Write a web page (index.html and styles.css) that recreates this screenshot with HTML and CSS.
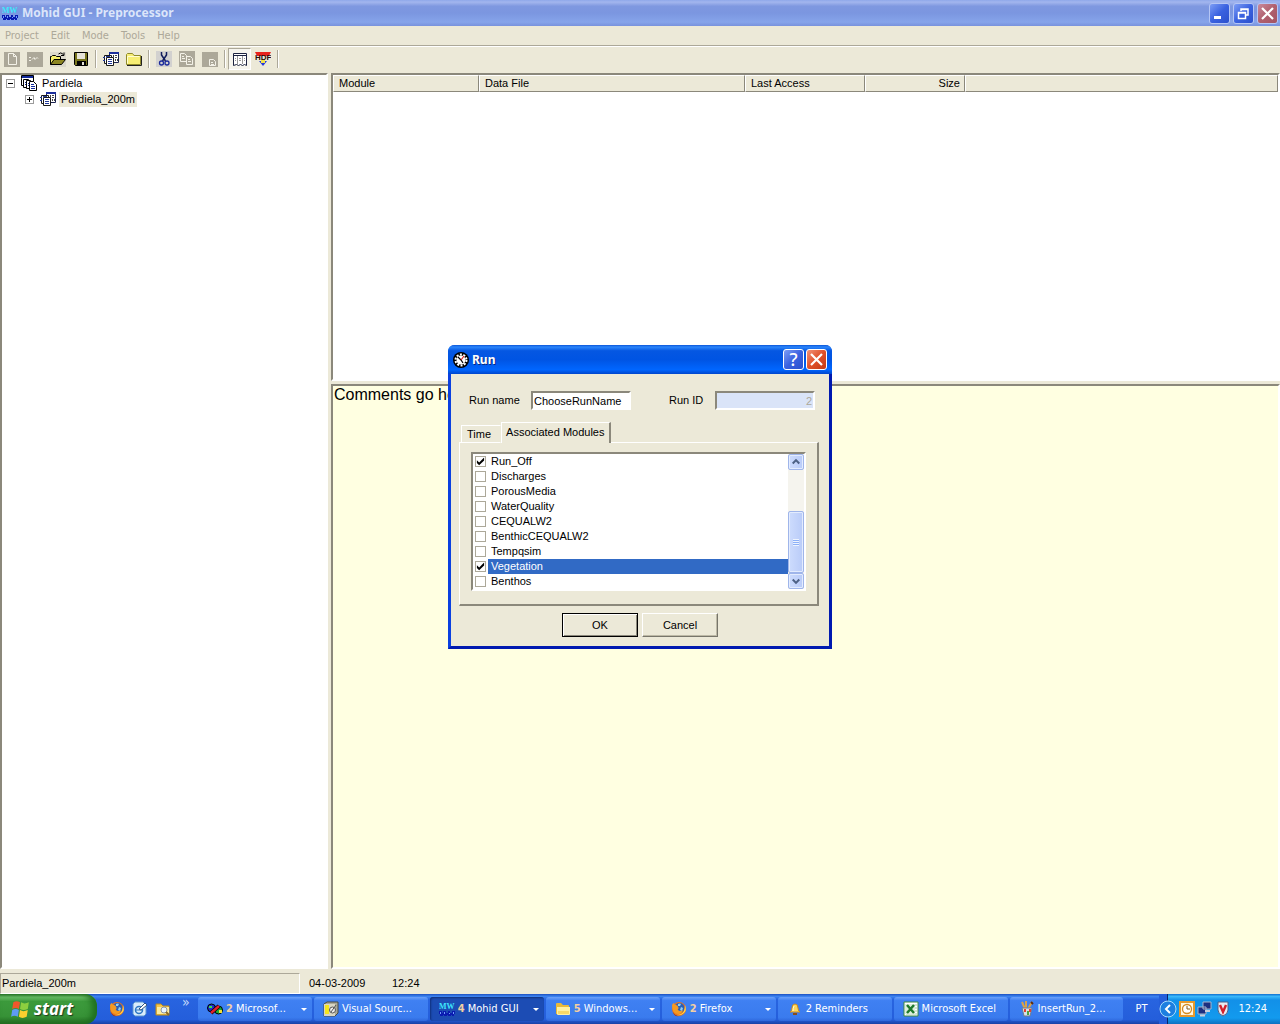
FILE: index.html
```
<!DOCTYPE html>
<html lang="en">
<head>
    <meta charset="utf-8" />
    <title>Mohid GUI - Preprocessor</title>
    <link rel="stylesheet" href="styles.css">
</head>
<body>

<!-- shared icons -->
<svg class="defs" aria-hidden="true">
    <symbol id="i-mohid" viewBox="0 0 16 16">
        <text x="0" y="8" font-family="Liberation Serif" font-size="8" font-weight="bold" fill="#3ee6fb">MW</text>
        <path d="M0 10h3v2h1v-2h3v2h2v-2h2v2h2v-2h3v3h-1v2h-2v-1h-1v1H9v-1H8v1H5v-1H4v1H1v-2H0z" fill="#0a1bb0"/>
        <path d="M1 11h1v2H1zM5 11h1v2H5zM10 12h1v1h-1zM14 11h1v2h-1z" fill="#6f9bff"/>
    </symbol>
    <symbol id="i-run" viewBox="0 0 16 16">
        <path d="M6.500 1.500h9v10h-9z" fill="#fff" stroke="#1a2350"/>
        <path d="M6 1h10v2H6z" fill="#1c2f9c"/>
        <path d="M1.500 4.500h7v8h-7z" fill="#fff" stroke="#1a1a1a"/>
        <path d="M3.500 6.500h7v8h-7z" fill="#fff" stroke="#1a1a1a"/>
        <path d="M0 6.500h2M0 9.500h2M5 8.500h4M5 10.500h4M5 12.500h4M3 5.500h4" stroke="#223a9c"/>
        <path d="M10 4h1v2h-1zM12 4h2v1h-2zM12 6h2v1h-2zM12 8h1v2h-1zM14 8h1v2h-1z" fill="#444"/>
    </symbol>
    <symbol id="i-project" viewBox="0 0 16 16">
        <path d="M.5 3.500v-3h12v10H.5z" fill="#fff" stroke="#000"/>
        <path d="M1 1h11v2H1z" fill="#122a9c"/>
        <path d="M2.500 4.500h5l2 2v6h-7z" fill="#fff" stroke="#000"/>
        <path d="M5.500 5.500h4l2 2v6h-6z" fill="#fff" stroke="#000"/>
        <path d="M8.500 6.500h4l3 3v6h-7z" fill="#fff" stroke="#000"/>
        <path d="M10 9.500h3M10 11.500h4M10 13.500h4M7 8.500h1M7 10.500h1M4 7.500h1M4 9.500h1" stroke="#122a9c"/>
    </symbol>
    <symbol id="i-folder" viewBox="0 0 16 16">
        <path d="M.5 13.500v-10l1-1h5l1.500 2h6.500v9z" fill="#f7ee74" stroke="#8f8a2c"/>
        <path d="M1.500 12.500V5.500h12" fill="none" stroke="#fffdd0"/>
        <path d="M1 14.500h14.500V5" fill="none" stroke="#222"/>
    </symbol>
    <symbol id="i-xpfolder" viewBox="0 0 16 16">
        <path d="M1 3q0-1 1-1h4l2 2h5q1 0 1 1v8H1z" fill="#e8b93b"/>
        <path d="M2 6h13v7q0 1-1 1H3q-1 0-1-1z" fill="#fff0a0"/>
        <path d="M3 10h11v3H3z" fill="#f8d867"/>
    </symbol>
    <symbol id="i-firefox" viewBox="0 0 16 16">
        <circle cx="8" cy="8" r="7" fill="#e8731c"/>
        <circle cx="8.500" cy="7" r="5" fill="#2a5fb8"/>
        <path d="M7 3q2-1 3 0l-1 2-2 0zM10 6l2 1-1 3-2-1z" fill="#8fd0f4"/>
        <path d="M1 4q1-2 2-2 0 2 2 2l2 1q-1 1 1 2-2 1-1 2 2 2 5 0-1 4-5 4Q1 13 1 4z" fill="#f59a22"/>
        <path d="M14 4q2 5-1 8-3 3-8 2 6 0 8-4 1-3 1-6z" fill="#ffd84a"/>
        <path d="M2 11q2 4 6 4-5 1-6-4z" fill="#a5300c"/>
    </symbol>
</svg>

<div class="app">
    <header class="titlebar">
        <svg class="icon" aria-hidden="true"><use href="#i-mohid"/></svg>
        <h1 class="title">Mohid GUI - Preprocessor</h1>
        <button class="caption" type="button" aria-label="Minimize"><svg viewBox="0 0 19 19"><path d="M4 12h7v3H4z" fill="#fff"/></svg></button>
        <button class="caption" type="button" aria-label="Restore"><svg viewBox="0 0 19 19"><path d="M7 7V5h7v6h-2M7 5.500h7M4.500 8.500h7v6h-7zM4.500 9h7" fill="none" stroke="#fff" stroke-width="1.500"/></svg></button>
        <button class="caption caption-close" type="button" aria-label="Close"><svg viewBox="0 0 19 19"><path d="M4 4l11 11M15 4L4 15" stroke="#fff" stroke-width="2.200"/></svg></button>
    </header>

    <nav class="menubar">
        <button type="button">Project</button>
        <button type="button">Edit</button>
        <button type="button">Mode</button>
        <button type="button">Tools</button>
        <button type="button">Help</button>
    </nav>

    <div class="toolbar">
        <button type="button" aria-label="New">
            <svg viewBox="0 0 16 16"><path d="M0 1h16v15H0z" fill="#aca899"/><path d="M4.500 2.500h5l3 3v8h-8zM9.500 2.500v3h3" fill="none" stroke="#f4f2e8"/></svg>
        </button>
        <button type="button" aria-label="Run">
            <svg viewBox="0 0 16 16"><path d="M0 1h16v15H0z" fill="#aca899"/><path d="M2 6.500h2M2 9.500h2M5 8.500l2-2 1 2 2-2 1 1" fill="none" stroke="#f4f2e8"/></svg>
        </button>
        <button type="button" aria-label="Open">
            <svg viewBox="0 0 16 16"><path d="M0 1h16v15H0z" fill="#dcd9cc"/><path d="M.5 13.500v-8h1l1-1h3l1 1h4v3" fill="#f5ef6a" stroke="#000"/><path d="M.5 13.500l3.500-5h11.500l-4 5z" fill="#8c8622" stroke="#000"/><path d="M8.500 3q2-2.500 5 .5M14 1.500v3h-3" fill="none" stroke="#000"/></svg>
        </button>
        <button type="button" aria-label="Save">
            <svg viewBox="0 0 16 16"><path d="M1.500 1.500h13v13h-12l-1-1z" fill="#77741c" stroke="#000"/><path d="M4 2h8v6H4z" fill="#e6e3d8"/><path d="M4 10h9v5H4z" fill="#000"/><path d="M9 11h2v3H9z" fill="#e6e3d8"/></svg>
        </button>
        <span class="sep"></span>
        <button type="button" aria-label="Runs"><svg><use href="#i-run"/></svg></button>
        <button type="button" aria-label="Folder"><svg><use href="#i-folder"/></svg></button>
        <span class="sep"></span>
        <button type="button" aria-label="Cut">
            <svg viewBox="0 0 16 16"><path d="M0 0h16v16H0z" fill="#d2d1cf"/><path d="M5.500 1v3l4 6M10.500 1v3l-4 6" fill="none" stroke="#111c5c" stroke-width="1.500"/><circle cx="5.500" cy="12" r="2" fill="none" stroke="#1b2b9c" stroke-width="1.300"/><circle cx="11" cy="12" r="2" fill="none" stroke="#1b2b9c" stroke-width="1.300"/></svg>
        </button>
        <button type="button" aria-label="Copy">
            <svg viewBox="0 0 16 16"><path d="M0 0h16v16H0z" fill="#aca899"/><path d="M1.500 2.500h4l2 2v6h-6zM7.500 5.500h4l2 2v6h-6zM3 5.500h2M3 7.500h3M9 8.500h2M9 10.500h3" fill="none" stroke="#f4f2e8"/></svg>
        </button>
        <button type="button" aria-label="Paste">
            <svg viewBox="0 0 16 16"><path d="M0 1h16v15H0z" fill="#aca899"/><path d="M7.500 8.500h4l2 2v4h-6zM9 11.500h2M9 13.500h3" fill="none" stroke="#f4f2e8"/></svg>
        </button>
        <span class="sep"></span>
        <button class="pressed" type="button" aria-label="Data files">
            <svg viewBox="0 0 16 16"><path d="M1.500 2.500h13v12l-2-1-2 1-2-1-2 1-2-1-3 1z" fill="#fff" stroke="#1c2340"/><path d="M1 4.500h14" stroke="#1c2340"/><path d="M5.500 5v8M10.500 5v8M3 7.500h1M7 7.500h2M12 7.500h1M3 9.500h1M7 9.500h2M12 9.500h1" stroke="#999"/></svg>
        </button>
        <button type="button" aria-label="HDF">
            <svg viewBox="0 0 16 16"><path d="M0 1h16l-2 4H2z" fill="#e8221c"/><path d="M4 10h8l-4 5z" fill="#2438d8"/><path d="M6 8h4v4H6z" fill="#f4e24a"/><text x="0" y="9" font-family="Liberation Sans" font-size="8" font-weight="bold" fill="#2a0a0a">HDF</text></svg>
        </button>
        <span class="sep"></span>
    </div>

    <main class="workspace">
        <aside class="tree sunken">
            <ul>
                <li class="node">
                    <button class="toggle" type="button" aria-label="Collapse Pardiela"></button>
                    <svg class="icon" aria-hidden="true"><use href="#i-project"/></svg>
                    <span class="node-name">Pardiela</span>
                </li>
                <li class="node node-child">
                    <button class="toggle toggle-closed" type="button" aria-label="Expand Pardiela_200m"></button>
                    <svg class="icon" aria-hidden="true"><use href="#i-run"/></svg>
                    <span class="node-name node-selected">Pardiela_200m</span>
                </li>
            </ul>
        </aside>
        <section class="panes">
            <div class="files sunken">
                <table>
                    <thead>
                        <tr>
                            <th class="col-module">Module</th>
                            <th class="col-file">Data File</th>
                            <th class="col-access">Last Access</th>
                            <th class="col-size">Size</th>
                            <th></th>
                        </tr>
                    </thead>
                    <tbody></tbody>
                </table>
            </div>
            <textarea class="comments sunken" aria-label="Comments">Comments go here</textarea>
        </section>
    </main>

    <footer class="statusbar">
        <span class="status-name">Pardiela_200m</span>
        <span class="status-date">04-03-2009</span>
        <span>12:24</span>
    </footer>

    <form class="dialog" role="dialog" aria-labelledby="run-title">
        <div class="dialog-title">
            <svg class="icon" viewBox="0 0 16 16" aria-hidden="true">
                <circle cx="8" cy="8" r="8" fill="#000"/>
                <circle cx="8" cy="8" r="4.500" fill="#fff"/>
                <circle cx="8" cy="8" r="5.500" fill="none" stroke="#fff" stroke-width="2" stroke-dasharray="2 1.450"/>
                <path d="M5 5l3 3 2 3" fill="none" stroke="#000" stroke-width="1.200"/>
                <path d="M8 8l3-4" stroke="#d22" stroke-width="1.200"/>
            </svg>
            <h2 id="run-title">Run</h2>
            <button class="caption" type="button" aria-label="Help">?</button>
            <button class="caption caption-close" type="button" aria-label="Close"><svg viewBox="0 0 19 19"><path d="M4 4l11 11M15 4L4 15" stroke="#fff" stroke-width="2.200"/></svg></button>
        </div>
        <div class="dialog-body">
            <div class="fields">
                <label for="run-name">Run name</label>
                <input class="sunken" id="run-name" type="text" value="ChooseRunName">
                <label class="label-id" for="run-id">Run ID</label>
                <input class="sunken" id="run-id" type="text" value="2" disabled>
            </div>
            <div class="tabs" role="tablist">
                <button class="tab" type="button" role="tab">Time</button>
                <button class="tab tab-active" type="button" role="tab" aria-selected="true">Associated Modules</button>
            </div>
            <div class="panel">
                <div class="modules sunken">
                    <div class="module-list">
                        <label><input type="checkbox" checked><span>Run_Off</span></label>
                        <label><input type="checkbox"><span>Discharges</span></label>
                        <label><input type="checkbox"><span>PorousMedia</span></label>
                        <label><input type="checkbox"><span>WaterQuality</span></label>
                        <label><input type="checkbox"><span>CEQUALW2</span></label>
                        <label><input type="checkbox"><span>BenthicCEQUALW2</span></label>
                        <label><input type="checkbox"><span>Tempqsim</span></label>
                        <label class="current"><input type="checkbox" checked><span>Vegetation</span></label>
                        <label><input type="checkbox"><span>Benthos</span></label>
                    </div>
                    <div class="scrollbar">
                        <button type="button" aria-label="Scroll up"><svg viewBox="0 0 15 15"><path d="M4 9l3.500-3.500L11 9" fill="none" stroke="#4d6185" stroke-width="2.200"/></svg></button>
                        <div class="track"></div>
                        <div class="thumb"><i></i></div>
                        <button type="button" aria-label="Scroll down"><svg viewBox="0 0 15 15"><path d="M4 6l3.500 3.500L11 6" fill="none" stroke="#4d6185" stroke-width="2.200"/></svg></button>
                    </div>
                </div>
            </div>
            <div class="actions">
                <button class="default" type="button">OK</button>
                <button type="button">Cancel</button>
            </div>
        </div>
    </form>
</div>

<div class="taskbar">
    <button class="start" type="button">
        <svg viewBox="0 0 18 18" aria-hidden="true">
            <path d="M3 3q3-2 6 0L8 9Q5 7 2 9z" fill="#f0562b"/>
            <path d="M10 3q3 2 7 0l-1 6q-4 2-7 0z" fill="#8ccf3f"/>
            <path d="M2 10q3-2 6 0l-1 6q-3-2-6 0z" fill="#5f9bf5"/>
            <path d="M9 10q3 2 7 0l-1 6q-4 2-7 0z" fill="#fbd02f"/>
        </svg>
        start
    </button>
    <div class="quick">
        <button type="button" aria-label="Firefox"><svg><use href="#i-firefox"/></svg></button>
        <button type="button" aria-label="Show desktop">
            <svg viewBox="0 0 16 16"><path d="M3 1h8l3 3v9l-2 2H3l-2-2V3z" fill="#d9ecfb" stroke="#5a94cf"/><circle cx="7" cy="9" r="3.500" fill="none" stroke="#2f78c4" stroke-width="1.500"/><path d="M4 9h6" stroke="#2f78c4"/><path d="M7 8l6-6 2 2-6 5z" fill="#fff" stroke="#33557f"/></svg>
        </button>
        <button type="button" aria-label="Explorer">
            <svg viewBox="0 0 16 16"><path d="M1 3h5l2 2h6v9H1z" fill="#f4c64c" stroke="#b98a1f"/><path d="M2 6h12v7H2z" fill="#fdeb9d"/><circle cx="9" cy="9" r="3" fill="#e8f4ff" stroke="#8b96a8"/><path d="M11 11l3 3" stroke="#8b6a2a" stroke-width="2"/></svg>
        </button>
        <span class="more">»</span>
    </div>
    <div class="tasks">
        <button type="button">
            <svg viewBox="0 0 16 16"><circle cx="4.500" cy="7" r="4" fill="#1d2fc8" stroke="#000"/><circle cx="11.500" cy="9" r="4" fill="#18a838" stroke="#000"/><path d="M2 5h3v2H2z" fill="#3be04b"/><path d="M12 9h3v3h-3z" fill="#f3e031"/><path d="M4 12L12 5" stroke="#000" stroke-width="4"/><path d="M4 12L12 5" stroke="#e5202c" stroke-width="2.500"/></svg>
            <b>2</b><span>Microsof...</span><i class="drop"></i>
        </button>
        <button type="button">
            <svg viewBox="0 0 16 16"><path d="M1 3l3-2h11v11l-3 3H1z" fill="#a9a998" stroke="#4b4b40"/><path d="M1 3h11v12H1z" fill="#d8d6c4"/><path d="M2 4h4v9H2z" fill="#f5e51d"/><circle cx="9.500" cy="9" r="3" fill="#eee" stroke="#555"/><path d="M8 11l5-7" stroke="#555"/></svg>
            <span>Visual Sourc...</span>
        </button>
        <button class="active" type="button">
            <svg><use href="#i-mohid"/></svg>
            <b>4</b><span>Mohid GUI</span><i class="drop"></i>
        </button>
        <button type="button">
            <svg><use href="#i-xpfolder"/></svg>
            <b>5</b><span>Windows...</span><i class="drop"></i>
        </button>
        <button type="button">
            <svg><use href="#i-firefox"/></svg>
            <b>2</b><span>Firefox</span><i class="drop"></i>
        </button>
        <button type="button">
            <svg viewBox="0 0 16 16"><path d="M3 11q2-1 2-4 0-4 3-4t3 4q0 3 2 4z" fill="#ffd75a" stroke="#c98a1e"/><path d="M7 5q-1 2-1 5" stroke="#fffbd8" fill="none"/><path d="M6 12h4v2H6z" fill="#8a4d16"/></svg>
            <span>2 Reminders</span>
        </button>
        <button type="button">
            <svg viewBox="0 0 16 16"><path d="M1 1h14v14H1z" fill="#fff" stroke="#3c8a43"/><path d="M8 4h6M8 7h6M8 10h6M3 13h11" stroke="#a7c9a9"/><path d="M2 3h10v10H2z" fill="#dcefdc"/><path d="M4 4l7 8M11 4l-7 8" stroke="#1f7a2c" stroke-width="2.500"/></svg>
            <span>Microsoft Excel</span>
        </button>
        <button type="button">
            <svg viewBox="0 0 16 16"><path d="M3 1l3 7M7 0v8M13 1l-4 7" stroke="#d8a24a" stroke-width="2"/><path d="M12 1l2 2" stroke="#5a2b12" stroke-width="2"/><path d="M3 7h10l-2 8H5z" fill="#d7dfe8" stroke="#6c7c92"/><path d="M5 8h2v3H5z" fill="#e5402e"/><path d="M8 10h2v4H8z" fill="#48a545"/><path d="M10 8h2v3h-2z" fill="#e5402e"/></svg>
            <span>InsertRun_2...</span>
        </button>
    </div>
    <span class="lang">PT</span>
    <div class="tray">
        <button class="tray-toggle" type="button" aria-label="Show hidden icons">
            <svg viewBox="0 0 18 18"><circle cx="9" cy="9" r="8" fill="#1d7fe0" stroke="#a9dcfb"/><path d="M11 5L7 9l4 4" fill="none" stroke="#fff" stroke-width="2"/></svg>
        </button>
        <svg class="icon" viewBox="0 0 16 16"><path d="M1 1h14v14H1z" fill="#fff6de" stroke="#e79a2c" stroke-width="2"/><circle cx="8" cy="8" r="4.500" fill="#fff" stroke="#d58a1e" stroke-width="1.300"/><path d="M8 5v3h3" fill="none" stroke="#8a5a12"/></svg>
        <svg class="icon" viewBox="0 0 16 16"><path d="M6 1h8v7H6zM1 6h8v7H1z" fill="#1c2f80" stroke="#a9b6cc"/><path d="M8 10h5M3 14.500h5" stroke="#c6cedb" stroke-width="2"/></svg>
        <svg class="icon" viewBox="0 0 16 16"><path d="M3 1h10v8q0 4-5 6-5-2-5-6z" fill="#e8ecf2" stroke="#4c5f86"/><path d="M5 4l3 7 3-7" fill="none" stroke="#d3202c" stroke-width="2.400"/></svg>
        <time>12:24</time>
    </div>
</div>

</body>
</html>
```
FILE: styles.css
```
*{box-sizing:border-box}
body{margin:0;height:100vh;display:flex;flex-direction:column;overflow:hidden;background:#ece9d8;color:#000;font:11px/15px "Liberation Sans",Arial,sans-serif}
h1,h2,ul{margin:0;padding:0;list-style:none}
button{margin:0;padding:0;border:0;background:none;color:inherit;font:inherit}
svg{display:block;flex:none}
.defs{position:absolute;width:0;height:0}
.icon{width:16px;height:16px}
.sunken{border:2px solid;border-color:#8b887b #fff #fff #8b887b}

.app{position:relative;flex:1;min-height:0;display:flex;flex-direction:column}

/* title bars */
.titlebar{display:flex;align-items:center;gap:2px;height:26px;padding:0 2px;background:linear-gradient(#8fa8ea,#a3b6ee 8%,#7f98e0 24%,#7b96e0 50%,#86a4ea 85%,#7892dc)}
.title{flex:1;padding-left:2px;color:#dbe5fa;font:bold 12px/18px "Noto Sans","Open Sans",sans-serif}
.caption{width:21px;height:21px;border:1px solid #fff;border-radius:3px;background:linear-gradient(135deg,#7d9df5,#3a62e0 50%,#2b50cc);color:#fff;font:500 18px/19px "Noto Sans",sans-serif}
.caption svg{width:19px;height:19px}
.caption-close{background:linear-gradient(135deg,#f0937a,#e0512a 50%,#c33a14)}
.titlebar .caption{border-color:#b5c6f5;margin-left:1px}
.titlebar .caption-close{background:linear-gradient(135deg,#c98a9c,#b0606e 50%,#a35463)}

.menubar{display:flex;gap:12px;height:20px;padding:0 5px;border-bottom:1px solid #aca899;color:#aca899;font:11px/18px "DejaVu Sans Condensed","DejaVu Sans",sans-serif}

.toolbar{display:flex;align-items:center;height:27px;border-top:1px solid #fff;padding-bottom:3px}
.toolbar button{display:grid;place-items:center;width:23px;height:22px}
.toolbar svg{width:16px;height:16px}
.toolbar .pressed{border:1px solid;border-color:#aca899 #fff #fff #aca899;background:#f6f5ee}
.sep{width:7px;height:18px;border-left:1px solid #aca899;background:linear-gradient(90deg,#fff 1px,transparent 1px);background-clip:padding-box;margin-left:3px;margin-right:-3px}

/* workspace */
.workspace{flex:1;min-height:0;display:flex;gap:3px}
.tree{flex:0 0 328px;background:#fff}
.node{display:flex;align-items:center;height:16px;padding-left:4px}
.node-child{padding-left:23px}
.toggle{width:9px;height:9px;border:1px solid #9b9b9b;background:linear-gradient(#000,#000) center/5px 1px no-repeat}
.toggle-closed{background:linear-gradient(#000,#000) center/5px 1px no-repeat,linear-gradient(#000,#000) center/1px 5px no-repeat}
.node .icon{margin:0 3px 0 6px}
.node-name{padding:0 2px}
.node-selected{background:#ece9d8}
.panes{flex:1;min-width:0;display:grid;grid-template-rows:308px 1fr;gap:3px}
.files{background:#fff}
.files table{width:100%;table-layout:fixed;border-collapse:separate;border-spacing:0}
.files th{height:17px;padding:0 4px 0 5px;border:1px solid;border-color:#fff #8b887b #8b887b #fff;background:#ece9d8;font-weight:normal;line-height:15px;text-align:left}
.files .col-module{width:146px}
.files .col-file{width:266px}
.files .col-access{width:120px}
.files .col-size{width:100px;text-align:right}
.comments{width:100%;height:100%;margin:0;padding:0 1px;background:#ffffe1;resize:none;outline:0;font:16px/18px "Liberation Sans",Arial,sans-serif}

.statusbar{display:flex;align-items:center;height:25px;padding-top:4px}
.status-name{flex:0 0 300px;padding:2px 1px;border:1px solid;border-color:#aca899 #fff #fff #aca899}
.status-date{width:92px;padding-left:9px}

/* run dialog */
.dialog{position:absolute;inset:0;margin:auto;width:384px;height:fit-content;border:3px solid;border-color:#0a50e0 #0019b0 #0019b0 #0a40e0;border-top:0;border-radius:7px 7px 0 0;background:#ece9d8}
.dialog-title{display:flex;align-items:center;gap:2px;height:29px;margin:0 -3px;padding:0 5px;border-radius:6px 6px 0 0;background:linear-gradient(#0a55d8,#2b86fb 7%,#0557e2 20%,#0054e3 50%,#0066ff 85%,#0045cc)}
.dialog-title h2{flex:1;padding-left:1px;color:#fff;text-shadow:1px 1px #0a2a80;font:bold 12px/18px "Noto Sans","Open Sans",sans-serif}
.dialog-body{padding:17px 10px 9px 8px}
.fields{display:flex;align-items:center;padding-left:10px}
.fields label{width:62px}
.fields .label-id{width:46px;margin-left:38px}
.fields input{width:100px;height:19px;padding:0 1px;outline:0;background:#fff;font:inherit}
.fields input:disabled{background:#dae4f8;color:#aca899;text-align:right}
.tabs{display:flex;align-items:flex-end;height:21px;margin-top:12px;padding-left:2px}
.tab{height:18px;padding:0 9px 0 5px;border:1px solid;border-color:#fff #ece9d8 transparent #fff}
.tab-active{position:relative;height:21px;padding:0 4px 2px;border-right:2px solid #8b887b;border-bottom:0;background:#ece9d8;z-index:1}
.panel{margin-top:-1px;padding:9px 11px 13px;border:1px solid #fff;border-right:2px solid #8b887b;border-bottom:2px solid #8b887b}
.modules{display:flex;background:#fff}
.module-list{flex:1}
.module-list label{display:flex;align-items:center;height:15px;padding-left:2px}
.module-list span{flex:1;margin-left:2px;padding-left:3px}
.module-list input{width:11px;height:11px;margin:0;border:1px solid #aca899;background:#fff;appearance:none}
.module-list input:checked::before{content:"";display:block;width:9px;height:9px;background:#000;clip-path:polygon(10% 35%,35% 60%,90% 5%,90% 38%,35% 93%,10% 68%)}
.current span{background:#316ac5;color:#fff}
.scrollbar{display:flex;flex-direction:column;width:16px;background:#f5f4ee}
.scrollbar button,.thumb{border:1px solid #9fb5ea;border-radius:2px;background:linear-gradient(90deg,#cddcfd,#b9cbf8);box-shadow:inset 0 0 0 1px #e3ecfe}
.scrollbar button{height:16px}
.scrollbar svg{width:14px;height:14px}
.track{flex:42}
.thumb{flex:61;display:grid;place-items:center}
.thumb i{width:6px;height:7px;background:repeating-linear-gradient(#eef4fe 0 1px,#8cb0f8 1px 2px)}
.actions{display:flex;justify-content:center;gap:4px;margin-top:7px;padding-left:2px}
.actions button{width:76px;height:24px;border:1px solid;border-color:#fff #77756a #77756a #fff;box-shadow:inset -1px -1px #bdb9a6}
.actions .default{border-color:#000;box-shadow:inset 1px 1px #fff,inset -1px -1px #8b887b}

/* taskbar */
.taskbar{flex:none;display:flex;align-items:stretch;height:30px;color:#fff;font:11px/16px "DejaVu Sans Condensed","DejaVu Sans",sans-serif;background:linear-gradient(#1c50c0,#3c83f0 8%,#2864e0 18%,#245edb 85%,#1941a5)}
.taskbar svg{width:16px;height:16px}
.start{display:flex;align-items:center;gap:4px;width:97px;padding-left:10px;border-radius:0 12px 12px 0;background:linear-gradient(#2d7a2d,#6fc26c 10%,#3c9a3c 25%,#379237 75%,#226b22);box-shadow:inset -5px 0 6px #1f6f1f;text-shadow:1px 1px 1px #1d3b1d;font:italic bold 17px/24px "Open Sans","Noto Sans",sans-serif}
.taskbar .start svg{width:20px;height:20px}
.quick{display:flex;align-items:center;gap:7px;width:101px;padding-left:12px}
.more{align-self:flex-start;padding-left:4px;font-size:14px;color:#c5dafb}
.tasks{flex:1;min-width:0;display:grid;grid-template-columns:repeat(8,1fr);gap:2px;padding:3px 0}
.tasks button{display:flex;align-items:center;gap:3px;min-width:0;padding:0 5px 0 9px;border-radius:3px;background:linear-gradient(#6ba0fa,#3f80f2 15%,#3a7bee 85%,#2f68dc);text-align:left;white-space:nowrap}
.tasks .active{background:#1c4cb4;box-shadow:inset 1px 1px 2px #10307c}
.tasks span{flex:1}
.tasks b{color:#f2cfa2}
.drop{border:3px solid transparent;border-top-color:#fff;border-bottom:0}
.lang{display:grid;place-items:center;width:36px}
.tray{display:flex;align-items:center;gap:2px;padding-right:13px;background:linear-gradient(90deg,#245edb 8px,#0a246a 8px,#0a246a 9px,transparent 9px),linear-gradient(#0f6fcf,#3ab8fa 8%,#1290e8 20%,#129aee 80%,#0d70c0)}
.taskbar .tray-toggle svg{width:18px;height:18px}
.tray time{padding-left:5px}
```
